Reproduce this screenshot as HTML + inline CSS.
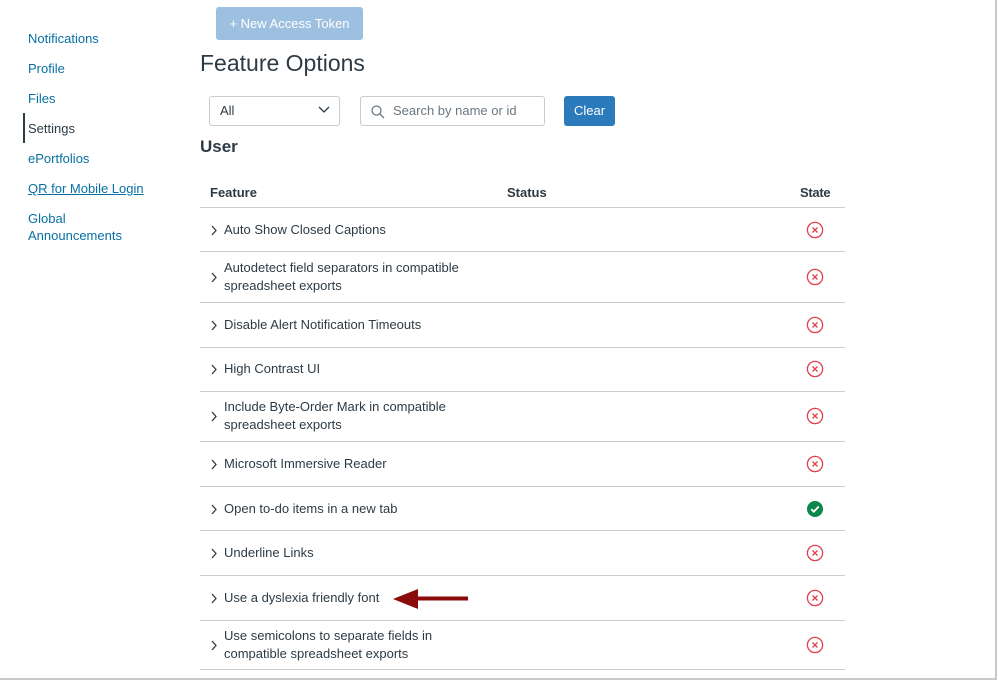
<!DOCTYPE html>
<html><head><style>
*{margin:0;padding:0;box-sizing:border-box}
body{width:998px;height:682px;background:#fff;font-family:"Liberation Sans",sans-serif;color:#2d3b45;position:relative;overflow:hidden}
.frame{position:absolute;left:0;top:0;width:997px;height:680px;border-right:2px solid #c8c8c8;border-bottom:2px solid #c8c8c8}
.nav a{position:absolute;left:28px;font-size:13px;color:#0770a3;text-decoration:none;line-height:17px}
.abs{position:absolute}
.line{position:absolute;left:200px;width:645px;height:1px;background:#c7cdd1}
.row{position:absolute;left:211px;font-size:13px;line-height:18px;color:#2d3b45}
.chev{position:absolute;left:210px}
.x{position:absolute;left:806px}
</style></head><body>
<div class="frame"></div>
<div class="nav">
<a style="top:30px">Notifications</a>
<a style="top:60px">Profile</a>
<a style="top:90px">Files</a>
<a style="top:120px;color:#2d3b45;">Settings</a>
<a style="top:150px">ePortfolios</a>
<a style="top:180px;text-decoration:underline">QR for Mobile Login</a>
<a style="top:210px">Global<br>Announcements</a>
</div>
<div class="abs" style="left:23px;top:113px;width:2px;height:30px;background:#2d3b45"></div>
<div class="abs" style="left:216px;top:7px;width:147px;height:33px;background:#9dc0e0;border-radius:3px;color:#fff;font-size:13px;line-height:33px;text-align:center">+ New Access Token</div>
<div class="abs" style="left:200px;top:50px;font-size:23px;color:#2d3b45">Feature Options</div>
<div class="abs" style="left:209px;top:96px;width:131px;height:30px;border:1px solid #c7cdd1;border-radius:3px;font-size:13px;line-height:28px;padding-left:10px">All
<svg style="position:absolute;right:9px;top:9px" width="12" height="8" viewBox="0 0 12 8"><path d="M1 1l5 5 5-5" fill="none" stroke="#2d3b45" stroke-width="1.3"/></svg></div>
<div class="abs" style="left:360px;top:96px;width:185px;height:30px;border:1px solid #c7cdd1;border-radius:3px;font-size:13px;line-height:28px;padding-left:32px;color:#6b7780">Search by name or id
<svg style="position:absolute;left:10px;top:8px" width="14" height="14" viewBox="0 0 14 14"><circle cx="5.5" cy="5.5" r="4.5" fill="none" stroke="#6b7780" stroke-width="1.3"/><path d="M9 9l4 4" stroke="#6b7780" stroke-width="1.3"/></svg></div>
<div class="abs" style="left:564px;top:96px;width:51px;height:30px;background:#2b7abc;border-radius:3px;color:#fff;font-size:13px;line-height:30px;text-align:center">Clear</div>
<div class="abs" style="left:200px;top:137px;font-size:17px;font-weight:bold;color:#2d3b45">User</div>
<div class="abs" style="left:210px;top:185px;font-size:13px;font-weight:bold">Feature</div>
<div class="abs" style="left:507px;top:185px;font-size:13px;font-weight:bold">Status</div>
<div class="abs" style="left:800px;top:185px;font-size:13px;font-weight:bold;letter-spacing:-0.3px">State</div>
<div class="line" style="top:207px"></div>
<div class="line" style="top:251px"></div>
<div class="line" style="top:302px"></div>
<div class="line" style="top:347px"></div>
<div class="line" style="top:391px"></div>
<div class="line" style="top:441px"></div>
<div class="line" style="top:486px"></div>
<div class="line" style="top:530px"></div>
<div class="line" style="top:575px"></div>
<div class="line" style="top:620px"></div>
<div class="line" style="top:669px"></div>

<div id="rows"></div>
<script>
var rows=[[230,"Auto Show Closed Captions"],[277,"Autodetect field separators in compatible<br>spreadsheet exports"],[325,"Disable Alert Notification Timeouts"],[369,"High Contrast UI"],[416,"Include Byte-Order Mark in compatible<br>spreadsheet exports"],[464,"Microsoft Immersive Reader"],[509,"Open to-do items in a new tab",1],[553,"Underline Links"],[598,"Use a dyslexia friendly font"],[645,"Use semicolons to separate fields in<br>compatible spreadsheet exports"]];
var h="";
rows.forEach(function(r){var c=r[0];var two=r[1].indexOf("<br>")>0;
h+='<svg class="chev" style="top:'+(c-5)+'px" width="8" height="11" viewBox="0 0 8 11"><path d="M2 1l4 4.5L2 10" fill="none" stroke="#2d3b45" stroke-width="1.3"/></svg>';
h+='<div class="row" style="left:224px;top:'+(c-(two?18:9))+'px">'+r[1]+'</div>';
if(r[2])h+='<svg class="x" style="top:'+(c-9)+'px" width="18" height="18" viewBox="0 0 18 18"><circle cx="9" cy="9" r="8" fill="#0b874b"/><path d="M5.3 9.2l2.5 2.5 5-5.2" fill="none" stroke="#fff" stroke-width="1.9"/></svg>';
else h+='<svg class="x" style="top:'+(c-9)+'px" width="18" height="18" viewBox="0 0 18 18"><circle cx="9" cy="9" r="7.6" fill="none" stroke="#e0414c" stroke-width="1.3"/><path d="M6.5 6.5l5 5M11.5 6.5l-5 5" stroke="#e0414c" stroke-width="1.3"/></svg>';
});
document.getElementById("rows").innerHTML=h;
</script>
<svg class="abs" style="left:390px;top:587px" width="82" height="24" viewBox="0 0 82 24"><path d="M78 9.5H28V2L3 12l25 10v-8.5h50z" fill="#8b0a0a"/></svg>
</body></html>
